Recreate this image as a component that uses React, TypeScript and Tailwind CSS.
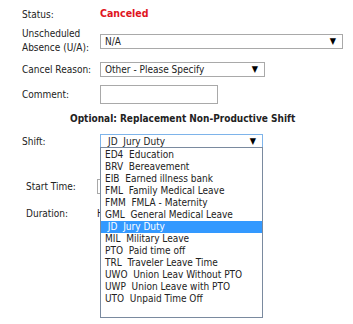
import React from 'react';

const font = { fontFamily: '"DejaVu Sans Condensed", Tahoma, "Liberation Sans", sans-serif' };

const shifts = [
  'ED4  Education',
  'BRV  Bereavement',
  'EIB  Earned illness bank',
  'FML  Family Medical Leave',
  'FMM  FMLA - Maternity',
  'GML  General Medical Leave',
  ' JD  Jury Duty',
  'MIL  Military Leave',
  'PTO  Paid time off',
  'TRL  Traveler Leave Time',
  'UWO  Union Leav Without PTO',
  'UWP  Union Leave with PTO',
  'UTO  Unpaid Time Off',
];

const Arrow = () => <span className="text-[9px] leading-none text-black">▼</span>;

const App = () => {
  return (
    <div className="relative w-[353px] h-[324px] bg-white text-[10px] text-[#222] overflow-hidden" style={font}>
      <div className="absolute left-0 top-0 w-full">
        <div className="flex items-center h-[16px] mt-[6px]">
          <div className="w-[100px] pl-[22px]">Status:</div>
          <div className="font-bold text-[#e0141e] text-[10.5px]">Canceled</div>
        </div>

        <div className="flex items-center h-[28px] mt-[5px]">
          <div className="w-[100px] pl-[22px] leading-[14px]">
            Unscheduled<br />Absence (U/A):
          </div>
          <div className="flex items-center justify-between w-[243px] h-[15px] border border-[#a9a9a9] pl-[4px] pr-[6px]">
            <span>N/A</span>
            <Arrow />
          </div>
        </div>

        <div className="flex items-center h-[15px] mt-[7px]">
          <div className="w-[100px] pl-[22px]">Cancel Reason:</div>
          <div className="flex items-center justify-between w-[165px] h-[15px] border border-[#a9a9a9] pl-[4px] pr-[6px]">
            <span>Other - Please Specify</span>
            <Arrow />
          </div>
        </div>

        <div className="flex items-center h-[19px] mt-[8px]">
          <div className="w-[100px] pl-[22px]">Comment:</div>
          <div className="w-[118px] h-[19px] border border-[#a9a9a9]" />
        </div>

        <div className="h-[14px] mt-[8px] pl-[70px] font-bold leading-[14px]">
          Optional: Replacement Non-Productive Shift
        </div>

        <div className="flex items-center h-[15px] mt-[8px]">
          <div className="w-[100px] pl-[22px]">Shift:</div>
          <div className="flex items-center justify-between w-[163px] h-[15px] border border-[#7eb4ea] pl-[7px] pr-[6px]">
            <span className="whitespace-pre">JD  Jury Duty</span>
            <Arrow />
          </div>
        </div>

        <div className="flex items-center h-[15px] mt-[30px]">
          <div className="w-[97px] pl-[26px]">Start Time:</div>
          <div className="w-[60px] h-[15px] border border-[#a9a9a9]" />
        </div>

        <div className="flex items-center h-[14px] mt-[12px]">
          <div className="w-[97px] pl-[26px]">Duration:</div>
          <div>H</div>
        </div>
      </div>

      {/* open dropdown list */}
      <div className="absolute left-[100px] top-[147px] w-[163px] h-[171px] border border-[#7a8a9f] bg-white pt-[1px]">
        {shifts.map((s, i) => (
          <div
            key={i}
            className={`h-[12px] leading-[12px] pl-[4px] whitespace-pre ${i === 6 ? 'bg-[#3399ff] text-white' : 'text-[#222]'}`}
          >
            {s}
          </div>
        ))}
      </div>
    </div>
  );
};

export default App;
